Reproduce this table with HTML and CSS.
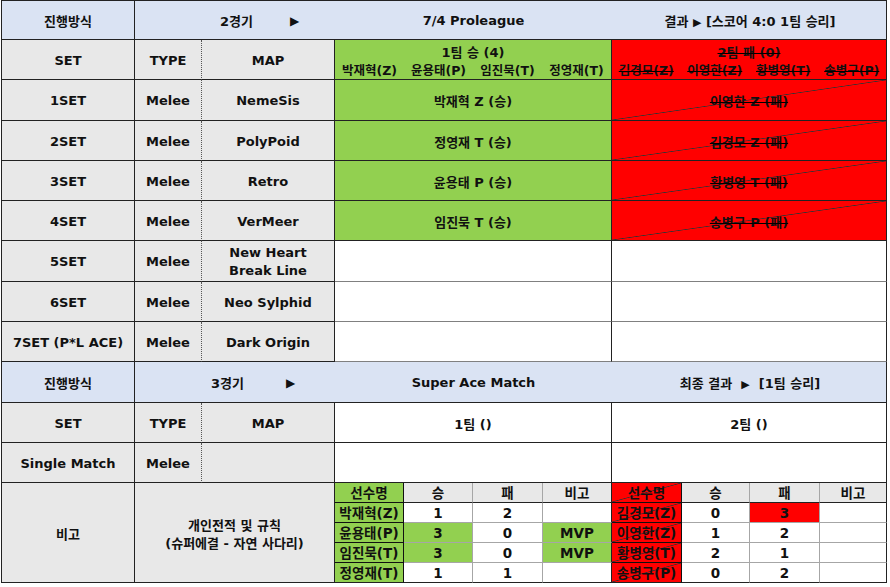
FILE: index.html
```html
<!DOCTYPE html>
<html lang="ko">
<head>
<meta charset="utf-8">
<title>Proleague</title>
<link rel="stylesheet" href="styles.css">
</head>
<body>
<div class="sheet">
  <!-- header 1 -->
  <div class="c hd">진행방식</div>
  <div class="c hd wide">
    <div class="hd-left hd-a"><span>2경기</span><span class="tri">▶</span></div>
    <div class="hd-mid">7/4 Proleague</div>
    <div class="hd-right">결과 <span class="tri sm">▶</span> [스코어 4:0 1팀 승리]</div>
  </div>

  <!-- column header -->
  <div class="c g">SET</div>
  <div class="c g dot">TYPE</div>
  <div class="c g">MAP</div>
  <div class="c t1 grn team">
    <div class="team-title">1팀 승 (4)</div>
    <div class="names"><span>박재혁(Z)</span><span>윤용태(P)</span><span>임진묵(T)</span><span>정영재(T)</span></div>
  </div>
  <div class="c t2 red team">
    <div class="team-title"><span class="strike">2팀 패 (0)</span></div>
    <div class="names"><span class="strike">김경모(Z)</span><span class="strike">이영한(Z)</span><span class="strike">황병영(T)</span><span class="strike">송병구(P)</span></div>
  </div>

  <!-- sets -->
  <div class="c g">1SET</div><div class="c g dot">Melee</div><div class="c g">NemeSis</div>
  <div class="c t1 grn">박재혁 Z (승)</div>
  <div class="c t2 red diag"><span class="strike">이영한 Z (패)</span></div>

  <div class="c g">2SET</div><div class="c g dot">Melee</div><div class="c g">PolyPoid</div>
  <div class="c t1 grn">정영재 T (승)</div>
  <div class="c t2 red diag"><span class="strike">김경모 Z (패)</span></div>

  <div class="c g">3SET</div><div class="c g dot">Melee</div><div class="c g">Retro</div>
  <div class="c t1 grn">윤용태 P (승)</div>
  <div class="c t2 red diag"><span class="strike">황병영 T (패)</span></div>

  <div class="c g">4SET</div><div class="c g dot">Melee</div><div class="c g">VerMeer</div>
  <div class="c t1 grn">임진묵 T (승)</div>
  <div class="c t2 red diag"><span class="strike">송병구 P (패)</span></div>

  <div class="c g">5SET</div><div class="c g dot">Melee</div><div class="c g two">New Heart<br>Break Line</div>
  <div class="c t1 w"></div>
  <div class="c t2 w"></div>

  <div class="c g">6SET</div><div class="c g dot">Melee</div><div class="c g">Neo Sylphid</div>
  <div class="c t1 w"></div>
  <div class="c t2 w"></div>

  <div class="c g">7SET (P*L ACE)</div><div class="c g dot">Melee</div><div class="c g">Dark Origin</div>
  <div class="c t1 w"></div>
  <div class="c t2 w"></div>

  <!-- header 2 -->
  <div class="c hd">진행방식</div>
  <div class="c hd wide">
    <div class="hd-left hd-b"><span>3경기</span><span class="tri">▶</span></div>
    <div class="hd-mid">Super Ace Match</div>
    <div class="hd-right">최종 결과 &nbsp;<span class="tri sm">▶</span>&nbsp; [1팀 승리]</div>
  </div>

  <div class="c g">SET</div><div class="c g dot">TYPE</div><div class="c g">MAP</div>
  <div class="c t1">1팀 ()</div>
  <div class="c t2">2팀 ()</div>

  <div class="c g">Single Match</div><div class="c g dot">Melee</div><div class="c g"></div>
  <div class="c t1"></div>
  <div class="c t2"></div>

  <!-- remarks -->
  <div class="c g rem">비고</div>
  <div class="c g rem2">개인전적 및 규칙<br>(슈퍼에결 - 자연 사다리)</div>

  <div class="c s nm grn">선수명</div>
  <div class="c s g hdr">승</div>
  <div class="c s g hdr">패</div>
  <div class="c s g hdr bkr">비고</div>
  <div class="c s nm red diag">선수명</div>
  <div class="c s g hdr">승</div>
  <div class="c s g hdr">패</div>
  <div class="c s g hdr bkr">비고</div>

  <div class="c s nm grn">박재혁(Z)</div>
  <div class="c s">1</div>
  <div class="c s">2</div>
  <div class="c s bkr"></div>
  <div class="c s nm red diag">김경모(Z)</div>
  <div class="c s">0</div>
  <div class="c s red">3</div>
  <div class="c s bkr"></div>

  <div class="c s nm grn">윤용태(P)</div>
  <div class="c s grn">3</div>
  <div class="c s">0</div>
  <div class="c s grn bkr">MVP</div>
  <div class="c s nm red diag">이영한(Z)</div>
  <div class="c s">1</div>
  <div class="c s">2</div>
  <div class="c s bkr"></div>

  <div class="c s nm grn">임진묵(T)</div>
  <div class="c s grn">3</div>
  <div class="c s">0</div>
  <div class="c s grn bkr">MVP</div>
  <div class="c s nm red diag">황병영(T)</div>
  <div class="c s">2</div>
  <div class="c s">1</div>
  <div class="c s bkr"></div>

  <div class="c s nm grn last">정영재(T)</div>
  <div class="c s last">1</div>
  <div class="c s last">1</div>
  <div class="c s bkr last"></div>
  <div class="c s nm red diag last">송병구(P)</div>
  <div class="c s last">0</div>
  <div class="c s last">2</div>
  <div class="c s bkr last"></div>
</div>
</body>
</html>
```

FILE: styles.css
```css
* { box-sizing: border-box; }

html, body {
  margin: 0;
  padding: 0;
  background: #ffffff;
}

body {
  font-family: "DejaVu Sans", "Noto Sans CJK KR", sans-serif;
  font-weight: 700;
  font-size: 13px;
  letter-spacing: 0;
  color: #111111;
}

.sheet {
  margin-left: 1px;
  width: 886px;
  display: grid;
  grid-template-columns: 133px 67px 133px 69px 69px 70px 69px 70px 68px 70px 67px;
  grid-template-rows: 39px 40px 41px 40px 40px 40px 41px 40px 40px 41px 40px 40px 20px 20px 20px 20px 20px;
  border-top: 1px solid #222;
  border-left: 1px solid #222;
}

.c {
  border-right: 1px solid #222;
  border-bottom: 1px solid #222;
  display: flex;
  align-items: center;
  justify-content: center;
  text-align: center;
  white-space: nowrap;
  background: #ffffff;
  padding-top: 1px;
}

.hd { background: #dae3f3; }
.g { background: #e8e8e8; }
.grn { background: #92d050; }
.red { background: #ff0000; }

.dot { border-right: 1px dotted #555; }

.wide {
  grid-column: span 10;
  display: grid;
  grid-template-columns: 200px 277px 1fr;
  align-items: center;
  justify-content: stretch;
}

.hd-left {
  display: flex;
  align-items: center;
}
.hd-a { padding-left: 85px; gap: 37px; }
.hd-b { padding-left: 76px; gap: 42px; }

.hd-mid { text-align: center; }
.hd-right { text-align: center; padding-left: 2px; }

.tri {
  font-family: "DejaVu Sans", sans-serif;
  font-size: 12px;
}
.tri.sm { font-size: 11px; }

.t1 { grid-column: span 4; }
.t2 { grid-column: span 4; }

.w { border-bottom-color: #808080; }

.team {
  flex-direction: column;
  justify-content: center;
  padding-top: 4px;
  gap: 2px;
}
.team-title { line-height: 16px; }
.names {
  width: 100%;
  display: grid;
  grid-template-columns: repeat(4, 1fr);
  line-height: 16px;
  font-size: 12.5px;
}
.names span { justify-self: center; }

.strike {
  text-decoration-line: line-through;
  text-decoration-thickness: 1px;
  text-decoration-color: #000;
}

.diag {
  background:
    linear-gradient(to top left,
      transparent calc(50% - 0.7px),
      #333 50%,
      transparent calc(50% + 0.7px)),
    #ff0000;
}

.two { line-height: 18px; flex-direction: column; }

.rem { grid-row: span 5; }
.rem2 {
  grid-column: span 2;
  grid-row: span 5;
  line-height: 18px;
  padding-top: 5px;
}

.s {
  font-size: 13.5px;
  border-right-color: #a6a6a6;
  border-bottom-color: #a6a6a6;
  line-height: 18px;
  padding-top: 0;
}
.s.hdr { border-bottom-color: #222; }
.s.nm {
  border-right-color: #111;
  border-bottom-color: #111;
}
.s.bkr { border-right-color: #222; }
.s.last { border-bottom-color: #222; }
```
